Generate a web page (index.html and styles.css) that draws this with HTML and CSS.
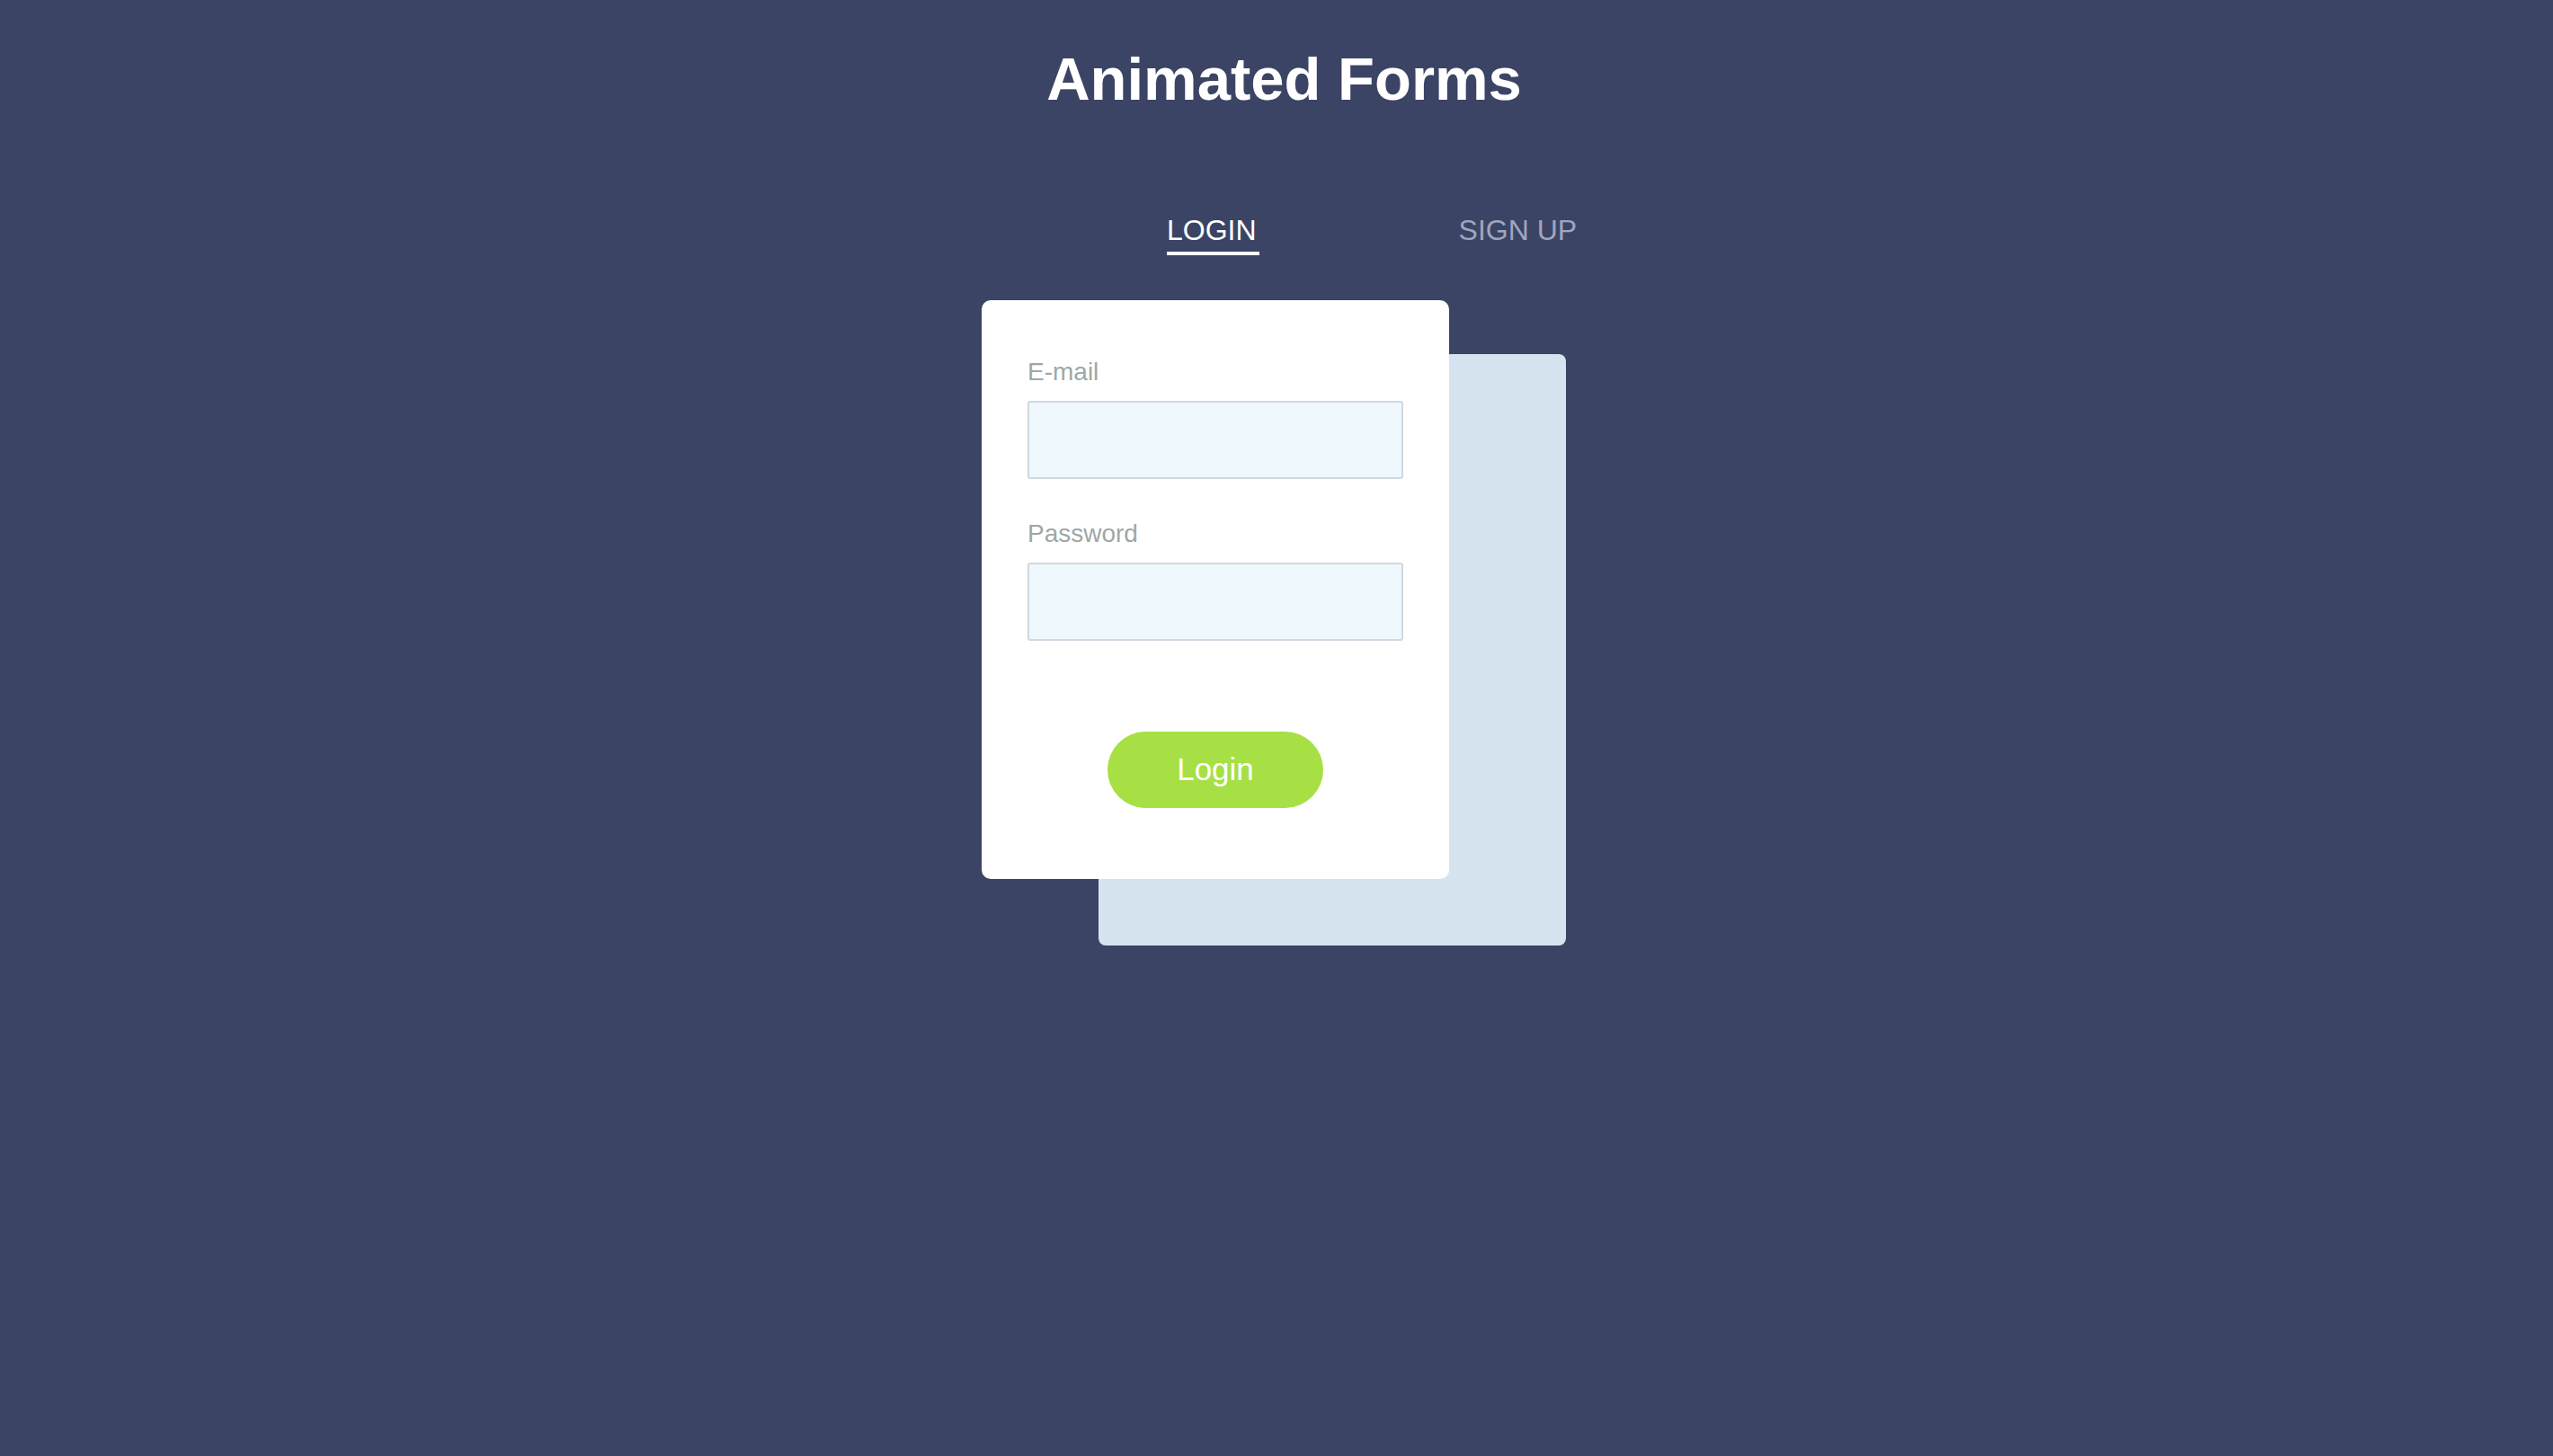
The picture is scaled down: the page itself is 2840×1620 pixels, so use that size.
FILE: index.html
```html
<!DOCTYPE html>
<html lang="en">
<head>
<meta charset="utf-8">
<title>Animated Forms</title>
<link rel="stylesheet" href="styles.css">
</head>
<body>
  <h1 class="title">Animated Forms</h1>
  <div class="stage">
    <nav class="tabs">
      <span class="tab tab-active">LOGIN</span>
      <span class="tab">SIGN UP</span>
    </nav>
    <div class="cards">
      <div class="card-back"></div>
      <form class="card">
        <div class="field">
          <label class="label">E-mail</label>
          <input class="input" type="text">
        </div>
        <div class="field">
          <label class="label">Password</label>
          <input class="input" type="password">
        </div>
        <div class="actions">
          <button class="btn" type="button">Login</button>
        </div>
      </form>
    </div>
  </div>
</body>
</html>
```

FILE: styles.css
```css
* { box-sizing: border-box; }

html, body {
  margin: 0;
  padding: 0;
}

body {
  background: #3b4465;
  font-family: "Liberation Sans", Arial, Helvetica, sans-serif;
  width: 2840px;
  height: 1620px;
  overflow: hidden;
}

.title {
  margin: 49px 0 0;
  padding-left: 17px;
  text-align: center;
  font-size: 67px;
  line-height: 77px;
  font-weight: 700;
  color: #ffffff;
}

.stage {
  width: 656px;
  margin: 0 auto;
}

.tabs {
  display: flex;
  gap: 222px;
  padding-left: 206px;
  margin-top: 112px;
  height: 96px;
  white-space: nowrap;
}

.tab {
  flex: none;
  font-size: 32px;
  line-height: 37px;
  height: 46px;
  color: #a0a6bd;
  padding-bottom: 5px;
}

.tab-active {
  color: #ffffff;
  border-bottom: 4px solid #ffffff;
  padding-right: 3px;
}

.cards {
  position: relative;
  width: 650px;
  height: 718px;
}

.card-back {
  position: absolute;
  left: 130px;
  top: 60px;
  width: 520px;
  height: 658px;
  background: #d6e4ef;
  border-radius: 8px;
  z-index: 0;
}

.card {
  position: relative;
  z-index: 1;
  width: 520px;
  height: 644px;
  background: #ffffff;
  border-radius: 10px;
  padding: 64px 51px 79px;
  margin: 0;
  display: flex;
  flex-direction: column;
}

.field {
  display: flex;
  flex-direction: column;
  margin-bottom: 45px;
}

.field + .field {
  margin-bottom: 101px;
}

.label {
  font-size: 28px;
  line-height: 32px;
  color: #9da7a9;
  margin-bottom: 16px;
}

.input {
  width: 418px;
  height: 87px;
  border: 2px solid #d0d8e1;
  border-radius: 3px;
  background: #eef8fd;
  margin: 0;
  padding: 0 16px;
  font-family: inherit;
  font-size: 28px;
  outline: none;
}

.actions {
  display: flex;
  justify-content: center;
}

.btn {
  width: 240px;
  height: 85px;
  border: none;
  border-radius: 43px;
  background: #a6e045;
  color: #ffffff;
  font-family: inherit;
  font-size: 35px;
  line-height: 1;
  padding: 0 0 2px;
  display: flex;
  align-items: center;
  justify-content: center;
}
```
